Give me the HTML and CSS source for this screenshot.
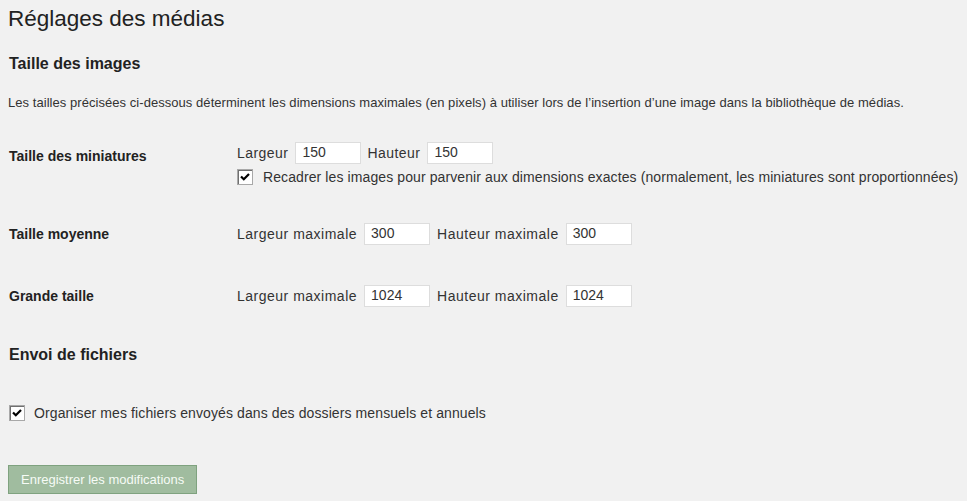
FILE: index.html
```html
<!DOCTYPE html>
<html lang="fr">
<head>
<meta charset="utf-8">
<title>Réglages des médias</title>
<link rel="stylesheet" href="styles.css">
</head>
<body>
<div class="wrap">
  <h1 class="title">Réglages des médias</h1>
  <h3 class="section">Taille des images</h3>
  <p class="desc">Les tailles précisées ci-dessous déterminent les dimensions maximales (en pixels) à utiliser lors de l’insertion d’une image dans la bibliothèque de médias.</p>

  <div class="row row1">
    <div class="th th1">Taille des miniatures</div>
    <div class="td">
      <div class="fields">
        <span class="lbl">Largeur</span>
        <span class="field">150</span>
        <span class="lbl">Hauteur</span>
        <span class="field">150</span>
      </div>
      <div class="check-line">
        <span class="check"><svg viewBox="0 0 14 14" width="14" height="14"><path d="M3 6.5 L5.8 9.3 L11 4" fill="none" stroke="#000" stroke-width="2.2"/></svg></span>
        <span class="check-text">Recadrer les images pour parvenir aux dimensions exactes (normalement, les miniatures sont proportionnées)</span>
      </div>
    </div>
  </div>

  <div class="row row2">
    <div class="th">Taille moyenne</div>
    <div class="td">
      <div class="fields wide">
        <span class="lbl">Largeur maximale</span>
        <span class="field">300</span>
        <span class="lbl">Hauteur maximale</span>
        <span class="field">300</span>
      </div>
    </div>
  </div>

  <div class="row row3">
    <div class="th">Grande taille</div>
    <div class="td">
      <div class="fields wide">
        <span class="lbl">Largeur maximale</span>
        <span class="field">1024</span>
        <span class="lbl">Hauteur maximale</span>
        <span class="field">1024</span>
      </div>
    </div>
  </div>

  <h3 class="section section2">Envoi de fichiers</h3>

  <div class="check-line upload">
    <span class="check"><svg viewBox="0 0 14 14" width="14" height="14"><path d="M3 6.5 L5.8 9.3 L11 4" fill="none" stroke="#000" stroke-width="2.2"/></svg></span>
    <span class="check-text">Organiser mes fichiers envoyés dans des dossiers mensuels et annuels</span>
  </div>

  <div class="submit">
    <span class="button">Enregistrer les modifications</span>
  </div>
</div>
</body>
</html>
```
FILE: styles.css
```css
html, body {
  margin: 0;
  padding: 0;
  background: #f1f1f1;
}
body {
  font-family: "Liberation Sans", Arial, sans-serif;
  color: #333;
  width: 967px;
  height: 501px;
  overflow: hidden;
}
.wrap {
  padding: 4px 8px 0 8px;
}
.title {
  margin: 0;
  font-size: 22.5px;
  font-weight: normal;
  line-height: 29px;
  color: #222;
}
.section {
  margin: 21px 0 0 1px;
  font-size: 16px;
  font-weight: bold;
  line-height: 20px;
  color: #222;
}
.desc {
  margin: 20px 0 0 0;
  font-size: 13px;
  line-height: 18px;
  letter-spacing: 0.05px;
  color: #333;
}
.row {
  display: grid;
  grid-template-columns: 229px 1fr;
}
.row1 { margin-top: 30px; }
.row2 { margin-top: 38px; }
.row3 { margin-top: 40px; }
.th {
  font-size: 14px;
  font-weight: bold;
  line-height: 18px;
  color: #222;
  padding-top: 2px;
  padding-left: 1px;
}
.th1 { padding-top: 5px; }
.fields {
  display: flex;
  align-items: center;
  height: 22px;
  font-size: 14px;
}
.lbl {
  color: #333;
  line-height: 18px;
  letter-spacing: 0.45px;
}
.field {
  box-sizing: border-box;
  width: 66px;
  height: 22px;
  margin: 0 6px 0 7px;
  padding: 0 6px;
  background: #fff;
  border: 1px solid #ddd;
  line-height: 19px;
  color: #333;
}
.wide .field {
  margin-right: 7px;
}
.wide .lbl {
  letter-spacing: 0.5px;
}
.check-line {
  display: flex;
  align-items: center;
  margin-top: 5px;
  height: 16px;
  font-size: 14px;
}
.check {
  box-sizing: border-box;
  width: 16px;
  height: 16px;
  border: 1px solid #a8a8a8;
  background: #fff;
  box-shadow: inset 1px 1px 0 #707070;
  flex: none;
  display: flex;
  align-items: center;
  justify-content: center;
}
.check svg {
  display: block;
  width: 14px;
  height: 14px;
}
.check-text {
  margin-left: 10px;
  line-height: 18px;
  letter-spacing: 0.1px;
  color: #333;
}
.section2 {
  margin-top: 38px;
}
.upload {
  margin-top: 40px;
  margin-left: 1px;
}
.upload .check-text {
  margin-left: 9px;
}
.submit {
  margin-top: 44px;
  display: flex;
}
.button {
  box-sizing: border-box;
  height: 29px;
  padding: 0 12px;
  background: #a0bc9f;
  border: 1px solid #7fa27f;
  color: #f6fbf6;
  font-size: 13px;
  line-height: 27px;
}
```
